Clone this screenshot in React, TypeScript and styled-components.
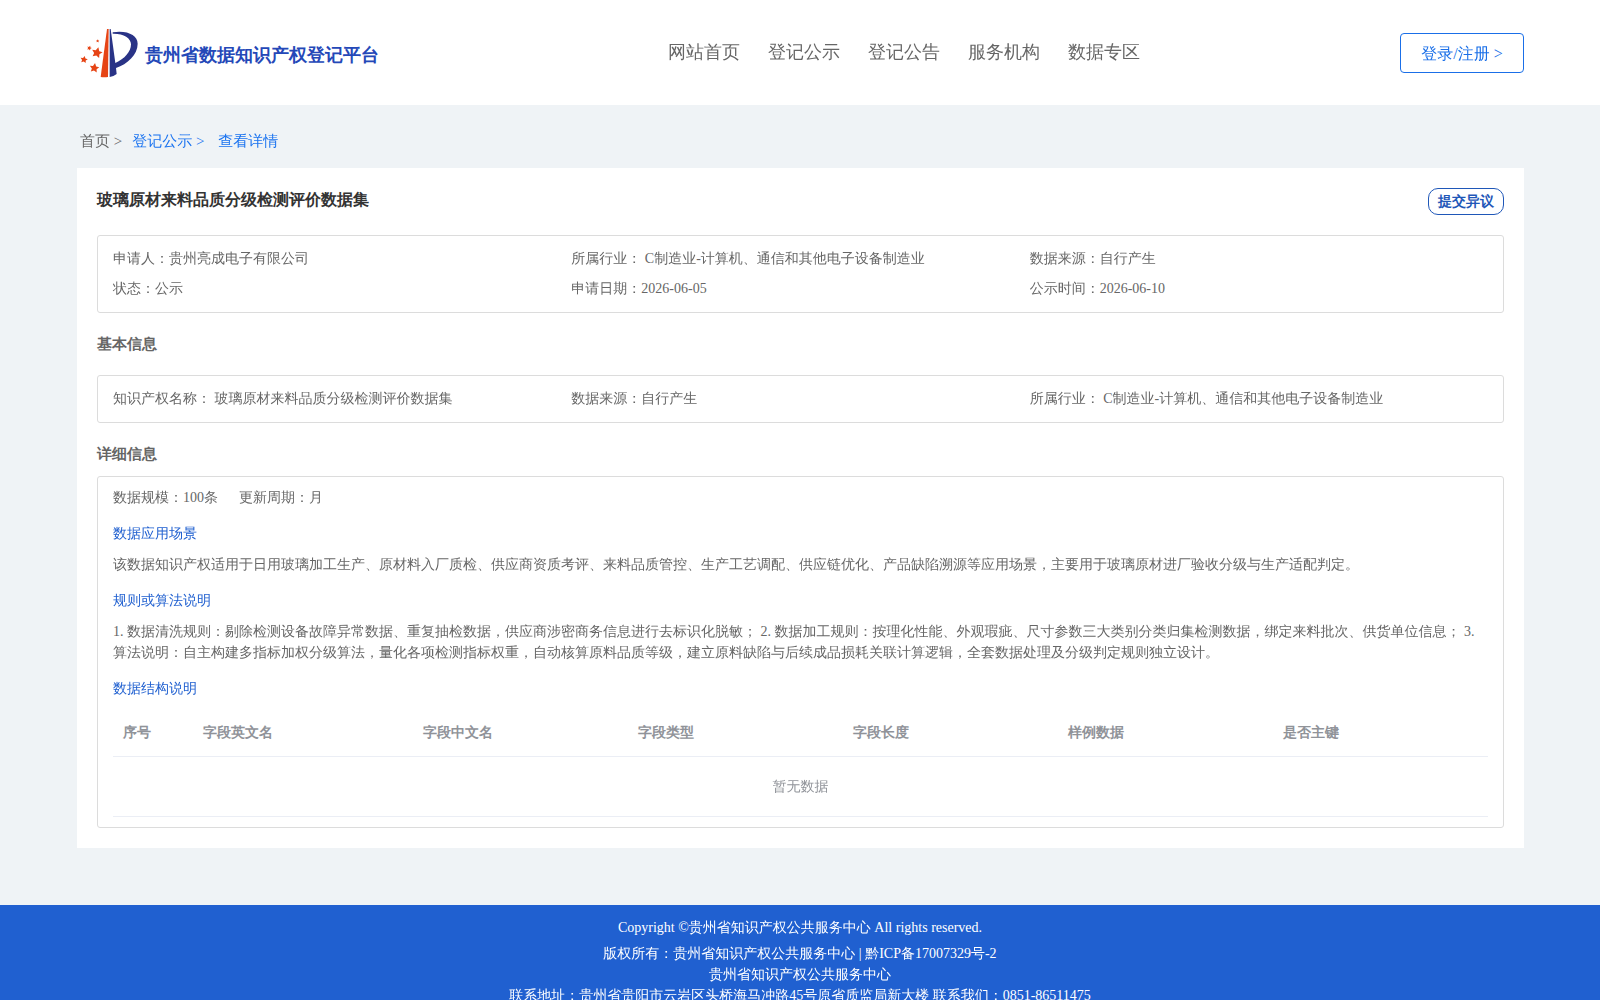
import React from 'react';
import styled, { createGlobalStyle } from 'styled-components';

const boldFont = '"Liberation Serif", serif';

const GlobalStyle = createGlobalStyle`
  * { box-sizing: border-box; }
  body {
    margin: 0;
    background: #eff3f6;
    color: #666;
    font: 14px/21px "Liberation Serif", "WenQuanYi Zen Hei", "Noto Sans CJK SC", serif;
  }
  h1, h2, h3, p { margin: 0; padding: 0; }
  h1, h2, th { font-family: ${boldFont}; }
  a { color: inherit; text-decoration: none; }
  button { font-family: inherit; cursor: pointer; }
`;

const Header = styled.header`
  display: flex;
  align-items: center;
  justify-content: space-between;
  height: 105px;
  padding: 0 76px 0 77px;
  background: #fff;
`;

const Brand = styled.a`
  display: flex;
  align-items: center;
  gap: 5px;
  width: 331px;
  padding-left: 3px;
`;

const BrandName = styled.span`
  padding-top: 5px;
  color: #2448b8;
  font-family: ${boldFont};
  font-size: 18px;
  line-height: 24px;
  font-weight: bold;
`;

const Nav = styled.nav`
  display: flex;
  gap: 28px;
  padding-bottom: 2px;
  font-size: 18px;
  line-height: 24px;
`;

const LoginButton = styled.button`
  width: 124px;
  height: 40px;
  padding: 3px 0 0;
  border: 1px solid #1a6fe8;
  border-radius: 4px;
  background: #fff;
  color: #1a6fe8;
  font-size: 16px;
`;

const Main = styled.main`
  padding: 0 76px 57px 77px;
`;

const Breadcrumb = styled.nav`
  display: flex;
  gap: 10px;
  padding: 24px 3px 15px;
  font-size: 15px;
  line-height: 24px;
  white-space: pre;
`;

const Crumb = styled.a<{ $active?: boolean }>`
  color: ${(p) => (p.$active ? '#1a73f0' : '#666')};
`;

const Card = styled.section`
  padding: 20px;
  background: #fff;
`;

const CardHead = styled.div`
  display: flex;
  align-items: flex-start;
  justify-content: space-between;
  height: 47px;
`;

const Title = styled.h1`
  color: #333;
  font-size: 16px;
  line-height: 24px;
`;

const ObjectionButton = styled.button`
  width: 76px;
  height: 27px;
  padding: 0;
  border: 1px solid #1f57b8;
  border-radius: 10px;
  background: #fff;
  color: #1f57b8;
  font-family: ${boldFont};
  font-size: 14px;
  font-weight: bold;
`;

const SectionTitle = styled.h2<{ $gap: number }>`
  padding: 19px 0 ${(p) => p.$gap}px;
  font-size: 15px;
  line-height: 24px;
`;

const Panel = styled.div`
  padding: 8px 15px;
  border: 1px solid #dcdcdc;
  border-radius: 3px;
`;

const InfoGrid = styled(Panel)`
  display: grid;
  grid-template-columns: repeat(3, 1fr);
  line-height: 30px;
`;

const DetailPanel = styled(Panel)`
  padding: 10px 15px;
`;

const Summary = styled.div`
  display: flex;
  gap: 21px;
`;

const SubTitle = styled.h3`
  padding: 15px 0 10px;
  color: #2060d0;
  font-size: 14px;
  font-weight: normal;
`;

const Table = styled.table`
  width: 100%;
  border-collapse: separate;
  border-spacing: 0;
  table-layout: fixed;
  color: #909399;

  th, td {
    padding: 12px 10px;
    border-bottom: 1px solid #ebeef5;
    text-align: left;
  }
  th { height: 48px; }
  td { height: 60px; text-align: center; }
`;

const Col = styled.col<{ $width?: number }>`
  width: ${(p) => (p.$width ? `${p.$width}px` : 'auto')};
`;

const Footer = styled.footer`
  padding: 12px 0 20px;
  background: #2060d0;
  color: #fff;
  text-align: center;
`;

const Copyright = styled.p`
  margin-bottom: 5px;
`;

const navItems = ['网站首页', '登记公示', '登记公告', '服务机构', '数据专区'];

const overview = [
  '申请人：贵州亮成电子有限公司',
  '所属行业： C制造业-计算机、通信和其他电子设备制造业',
  '数据来源：自行产生',
  '状态：公示',
  '申请日期：2026-06-05',
  '公示时间：2026-06-10',
];

const basics = [
  '知识产权名称： 玻璃原材来料品质分级检测评价数据集',
  '数据来源：自行产生',
  '所属行业： C制造业-计算机、通信和其他电子设备制造业',
];

const columns: { label: string; width?: number }[] = [
  { label: '序号', width: 80 },
  { label: '字段英文名', width: 220 },
  { label: '字段中文名' },
  { label: '字段类型' },
  { label: '字段长度' },
  { label: '样例数据' },
  { label: '是否主键' },
];

const star = '0,-10 3.2,-3.6 9.5,-3.1 4.8,1.6 5.9,8.1 0,5 -5.9,8.1 -4.8,1.6 -9.5,-3.1 -3.2,-3.6';
const stars = [
  { x: 111, y: 128, s: 1.7, r: 14 },
  { x: 103, y: 174, s: 1.5, r: 8 },
  { x: 72, y: 149, s: 1.15, r: 10 },
  { x: 88, y: 114, s: 0.75, r: 20 },
  { x: 113, y: 93, s: 0.5, r: 10 },
];

const Logo = () => (
  <svg width="60" height="52" viewBox="60 51 180 156" aria-hidden="true">
    <path d="M141 57 H146 L144 201 Q133 203 122 201 Z" fill="#e64415" />
    <path
      d="M149 57 H152 L159 108 L166 159 C194 147 213 125 213 103 C213 84 190 70 158 71 V67 C202 60 233 76 233 101 C233 134 202 162 168 174 L170 192 Q161 199 149 201 Z"
      fill="#293386"
    />
    {stars.map((t) => (
      <polygon
        key={`${t.x}-${t.y}`}
        points={star}
        fill="#e64415"
        transform={`translate(${t.x} ${t.y}) rotate(${t.r}) scale(${t.s})`}
      />
    ))}
  </svg>
);

export default function App() {
  return (
    <>
      <GlobalStyle />
      <Header>
        <Brand href="#">
          <Logo />
          <BrandName>贵州省数据知识产权登记平台</BrandName>
        </Brand>
        <Nav>
          {navItems.map((item) => (
            <a key={item} href="#">{item}</a>
          ))}
        </Nav>
        <LoginButton type="button">登录/注册 &gt;</LoginButton>
      </Header>

      <Main>
        <Breadcrumb>
          <Crumb href="#">{'首页 >'}</Crumb>
          <Crumb href="#" $active>{'登记公示 > '}</Crumb>
          <Crumb href="#" $active>查看详情</Crumb>
        </Breadcrumb>

        <Card>
          <CardHead>
            <Title>玻璃原材来料品质分级检测评价数据集</Title>
            <ObjectionButton type="button">提交异议</ObjectionButton>
          </CardHead>
          <InfoGrid>
            {overview.map((text) => <div key={text}>{text}</div>)}
          </InfoGrid>

          <SectionTitle $gap={19}>基本信息</SectionTitle>
          <InfoGrid>
            {basics.map((text) => <div key={text}>{text}</div>)}
          </InfoGrid>

          <SectionTitle $gap={10}>详细信息</SectionTitle>
          <DetailPanel>
            <Summary>
              <span>数据规模：100条</span>
              <span>更新周期：月</span>
            </Summary>
            <SubTitle>数据应用场景</SubTitle>
            <p>该数据知识产权适用于日用玻璃加工生产、原材料入厂质检、供应商资质考评、来料品质管控、生产工艺调配、供应链优化、产品缺陷溯源等应用场景，主要用于玻璃原材进厂验收分级与生产适配判定。</p>
            <SubTitle>规则或算法说明</SubTitle>
            <p>1. 数据清洗规则：剔除检测设备故障异常数据、重复抽检数据，供应商涉密商务信息进行去标识化脱敏； 2. 数据加工规则：按理化性能、外观瑕疵、尺寸参数三大类别分类归集检测数据，绑定来料批次、供货单位信息； 3. 算法说明：自主构建多指标加权分级算法，量化各项检测指标权重，自动核算原料品质等级，建立原料缺陷与后续成品损耗关联计算逻辑，全套数据处理及分级判定规则独立设计。</p>
            <SubTitle>数据结构说明</SubTitle>
            <Table>
              <colgroup>
                {columns.map((c) => <Col key={c.label} $width={c.width} />)}
              </colgroup>
              <thead>
                <tr>{columns.map((c) => <th key={c.label} scope="col">{c.label}</th>)}</tr>
              </thead>
              <tbody>
                <tr><td colSpan={columns.length}>暂无数据</td></tr>
              </tbody>
            </Table>
          </DetailPanel>
        </Card>
      </Main>

      <Footer>
        <Copyright>Copyright ©贵州省知识产权公共服务中心 All rights reserved.</Copyright>
        <p>版权所有：贵州省知识产权公共服务中心 | 黔ICP备17007329号-2</p>
        <p>贵州省知识产权公共服务中心</p>
        <p>联系地址：贵州省贵阳市云岩区头桥海马冲路45号原省质监局新大楼 联系我们：0851-86511475</p>
      </Footer>
    </>
  );
}
